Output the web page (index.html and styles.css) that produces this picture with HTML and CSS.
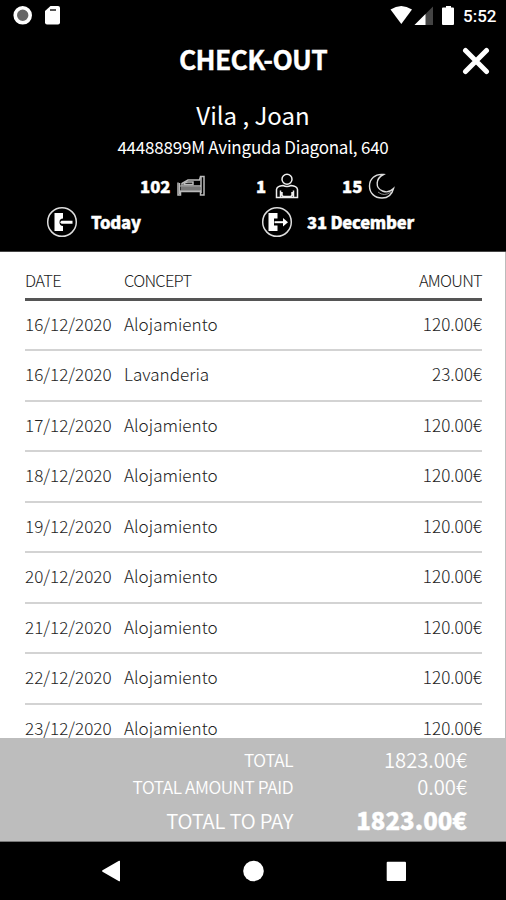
FILE: index.html
```html
<!DOCTYPE html>
<html lang="en">
<head>
    <meta charset="UTF-8">
    <meta name="viewport" content="width=device-width, initial-scale=1.0">
    <title>Check-out</title>
    <link rel="stylesheet" href="styles.css">
</head>
<body>
    <div class="screen">
        <header class="header">
            <div class="status-bar">
                <svg class="status-left" width="64" height="32" viewBox="0 0 64 32">
                    <circle cx="22.7" cy="15.3" r="7.5" fill="#666" stroke="#fff" stroke-width="3.6"/>
                    <path d="M50.5 6H58q2 0 2 2v14.500q0 2-2 2H47q-2 0-2-2V11z" fill="#fff"/>
                    <path d="M50 10h6" stroke="#555" stroke-width="2"/>
                </svg>
                <svg class="status-right" width="70" height="32" viewBox="0 0 70 32">
                    <path d="M.5 9.500Q11.300 2.500 22 9.500L11.300 24z" fill="#fff"/>
                    <path d="M43 6.500V25H24.500z" fill="#444"/>
                    <path d="M35.500 14V25h-11z" fill="#fff"/>
                    <path d="M56 6h5v1.500h2q1 0 1 1V24q0 1-1 1H53q-1 0-1-1V8.500q0-1 1-1h3z" fill="#fff"/>
                </svg>
                <span class="clock">5:52</span>
            </div>
            <div class="title-bar">
                <h1>CHECK-OUT</h1>
                <svg class="close" width="28" height="28" viewBox="0 0 28 28">
                    <path d="M3.500 3.500l21 21M24.500 3.500l-21 21" stroke="#fff" stroke-width="5" stroke-linecap="round"/>
                </svg>
            </div>
            <div class="guest">Vila , Joan</div>
            <div class="address">44488899M Avinguda Diagonal, 640</div>
            <div class="stay">
                <span class="stay-item room">102
                    <svg width="28" height="22" viewBox="0 0 28 22" fill="none" stroke="#bbb" stroke-width="1.500">
                        <path d="M1 7.500v12.500h2.500v-3.500h20V20H27V1.500h-3.500l-1 3.500H11L5 8.500v2"/>
                        <path d="M3.500 11h20M3.500 16h20M24 2v16M2.500 8v11"/>
                        <path d="M4 13.500h19" stroke="#777" stroke-width="3"/>
                        <path d="M7 9.500Q7 7 11 7h5v2.500z"/>
                    </svg>
                </span>
                <span class="stay-item people">1
                    <svg width="24" height="26" viewBox="0 0 24 26" fill="none" stroke="#eee" stroke-width="1.500">
                        <circle cx="12" cy="6.300" r="5"/>
                        <path d="M8 12.500q-6 .5-6.500 4v8h21v-8q-.5-3.500-6.500-4q-4 2-8 0z"/>
                        <path d="M5.500 17.500v7M18.500 17.500v7M7 19v3q0 1.500 2 1.500h6q2 0 2-1.500v-3"/>
                    </svg>
                </span>
                <span class="stay-item nights">15
                    <svg width="27" height="26" viewBox="0 0 27 26" fill="none" stroke="#ddd" stroke-width="1.400">
                        <path d="M15.500 1.500C7 .5 1.500 6 1.500 13s5 12 12.500 12c6 0 10-3.500 11.500-9.500c-3 3-7.500 4-11 2.500C7 15 7.500 5.500 15.500 1.500z"/>
                        <path d="M10 19q6 5 13 0" stroke="#888" stroke-width="1"/>
                    </svg>
                </span>
            </div>
            <div class="dates">
                <span class="date-item arrival">
                    <svg width="32" height="32" viewBox="0 0 32 32">
                        <circle cx="16" cy="16" r="14.300" fill="none" stroke="#ddd" stroke-width="1.500"/>
                        <path d="M8.500 7H17v5.500q-3.500 0-3.500 3.700t3.500 3.700V25H8.500z" fill="#fff"/>
                        <path d="M15.500 14.700h11v3h-11l-1.500-1.500z" fill="#fff"/>
                    </svg>
                    Today
                </span>
                <span class="date-item departure">
                    <svg width="32" height="32" viewBox="0 0 32 32">
                        <circle cx="16" cy="16" r="14.300" fill="none" stroke="#ddd" stroke-width="1.500"/>
                        <path d="M7.500 7H16.500v5.500H13v7h3.500v5.500h-9z" fill="#fff"/>
                        <path d="M13.500 16.200h10" stroke="#fff" stroke-width="2"/>
                        <path d="M22 12l5 4.200-5 4.200z" fill="#fff"/>
                    </svg>
                    31 December
                </span>
            </div>
        </header>

        <main class="charges">
            <div class="row row-head"><span>DATE</span><span>CONCEPT</span><span class="amount">AMOUNT</span></div>
            <div class="row"><span>16/12/2020</span><span>Alojamiento</span><span class="amount">120.00€</span></div>
            <div class="row"><span>16/12/2020</span><span>Lavanderia</span><span class="amount">23.00€</span></div>
            <div class="row"><span>17/12/2020</span><span>Alojamiento</span><span class="amount">120.00€</span></div>
            <div class="row"><span>18/12/2020</span><span>Alojamiento</span><span class="amount">120.00€</span></div>
            <div class="row"><span>19/12/2020</span><span>Alojamiento</span><span class="amount">120.00€</span></div>
            <div class="row"><span>20/12/2020</span><span>Alojamiento</span><span class="amount">120.00€</span></div>
            <div class="row"><span>21/12/2020</span><span>Alojamiento</span><span class="amount">120.00€</span></div>
            <div class="row"><span>22/12/2020</span><span>Alojamiento</span><span class="amount">120.00€</span></div>
            <div class="row"><span>23/12/2020</span><span>Alojamiento</span><span class="amount">120.00€</span></div>
        </main>

        <section class="totals">
            <div class="total-row"><span class="label">TOTAL</span><span class="value">1823.00€</span></div>
            <div class="total-row"><span class="label">TOTAL AMOUNT PAID</span><span class="value">0.00€</span></div>
            <div class="total-row to-pay"><span class="label">TOTAL TO PAY</span><span class="value">1823.00€</span></div>
        </section>

        <nav class="nav-bar">
            <svg width="506" height="58" viewBox="0 0 506 58" fill="#fff">
                <path d="M102.500 28.300L119 18.800q1-.5 1 .5v19.400q0 1-1 .5L102.500 29.700q-1-.7 0-1.400z"/>
                <circle cx="253.500" cy="29" r="10.300"/>
                <rect x="386.700" y="19.700" width="19.300" height="19.300" rx="1"/>
            </svg>
        </nav>
    </div>
</body>
</html>
```
FILE: styles.css
```css
* {
    box-sizing: border-box;
}
body {
    margin: 0;
    background: #000;
    font-family: "Noto Sans CJK SC", "Noto Sans", sans-serif;
}
svg {
    display: block;
    flex: none;
}
.screen {
    width: 506px;
    height: 900px;
    display: flex;
    flex-direction: column;
    overflow: hidden;
}

/* header */
.header {
    height: 252px;
    flex: none;
    background: #000;
    border-bottom: 1px solid #444;
    color: #fff;
}
.status-bar {
    height: 32px;
    display: flex;
    align-items: center;
}
.status-right {
    margin-left: 326px;
}
.clock {
    margin-left: 3px;
    font: 500 17px/32px Roboto, sans-serif;
}
.title-bar {
    height: 56px;
    display: grid;
    grid-template-columns: 44px 1fr 44px;
    align-items: center;
}
.title-bar h1 {
    grid-column: 2;
    margin: 0 0 2px;
    font-size: 26.5px;
    font-weight: 700;
    line-height: 52px;
    letter-spacing: -0.7px;
    text-align: center;
    -webkit-text-stroke: 0.3px #fff;
}
.close {
    margin-top: 2px;
}
.guest {
    margin-top: 10px;
    font-size: 24px;
    line-height: 34px;
    text-align: center;
}
.address {
    font-size: 17px;
    line-height: 29px;
    letter-spacing: -0.22px;
    text-align: center;
}
.stay {
    height: 28px;
    margin-top: 11px;
    display: grid;
    grid-template-columns: 256px 86px 1fr;
}
.stay-item,
.date-item {
    display: flex;
    align-items: center;
    font-size: 16.7px;
    font-weight: 900;
    line-height: 22px;
    -webkit-text-stroke: 0.4px #fff;
}
.stay-item {
    gap: 6px;
}
.room {
    padding-left: 140px;
}
.people {
    gap: 9px;
}
.dates {
    height: 34px;
    margin-top: 5px;
    display: grid;
    grid-template-columns: 215px 1fr;
    padding-left: 46px;
}
.date-item {
    gap: 13px;
    letter-spacing: -0.25px;
}
.departure {
    gap: 14px;
}

/* list of charges */
.charges {
    height: 486px;
    flex: none;
    overflow: hidden;
    padding: 12px 23px 0 25px;
    background: #fff;
    border-right: 1px solid #bbb;
}
.row {
    height: 50.45px;
    display: grid;
    grid-template-columns: 99px 1fr 110px;
    border-bottom: 2px solid #d3d3d3;
    color: #222;
    font-size: 17.1px;
    font-weight: 300;
    line-height: 46px;
}
.row-head {
    height: 37px;
    border-bottom: 3px solid #555;
    font-size: 16.5px;
    line-height: 33px;
    letter-spacing: -0.75px;
}
.amount {
    text-align: right;
}

/* totals */
.totals {
    height: 104px;
    flex: none;
    padding-top: 8px;
    background: #bdbdbd;
    border-bottom: 1px solid #777;
    color: #fff;
}
.total-row {
    height: 27px;
    display: grid;
    grid-template-columns: 293px 174px;
    text-align: right;
    line-height: 27px;
}
.label {
    font-size: 17.3px;
    font-weight: 350;
    letter-spacing: -0.45px;
}
.value {
    font-size: 20.2px;
    font-weight: 350;
}
.to-pay {
    margin-top: 3px;
    line-height: 34px;
}
.to-pay .label {
    font-size: 20.3px;
    letter-spacing: -0.25px;
}
.to-pay .value {
    font-size: 24px;
    font-weight: 900;
    -webkit-text-stroke: 0.4px #fff;
}

.nav-bar {
    height: 58px;
    background: #000;
}
```
